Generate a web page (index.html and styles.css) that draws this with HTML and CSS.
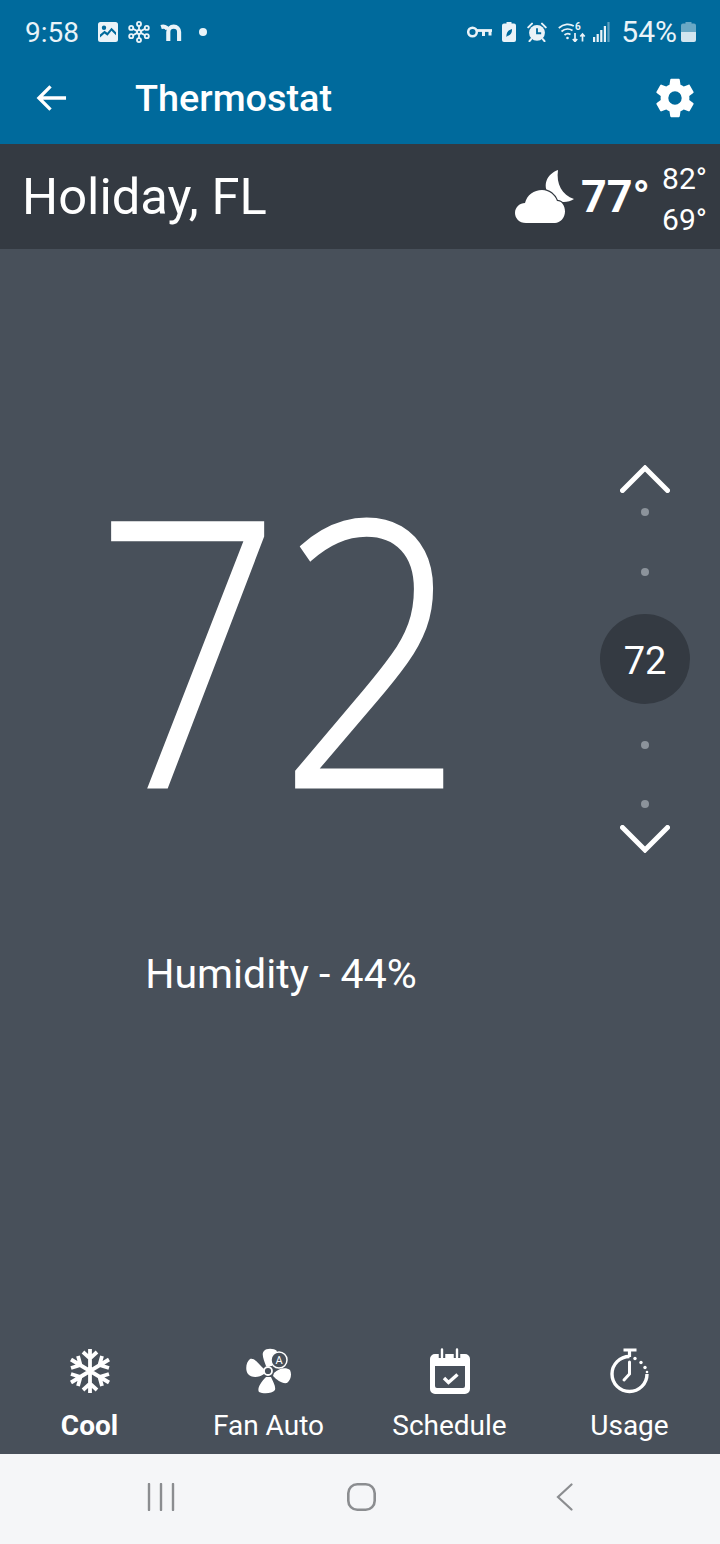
FILE: index.html
```html
<!DOCTYPE html>
<html lang="en">
<head>
  <meta charset="UTF-8">
  <meta name="viewport" content="width=device-width, initial-scale=1.0">
  <title>Thermostat</title>
  <link rel="stylesheet" href="styles.css">
</head>
<body>
  <div class="screen">
    <header class="top-bar">
      <!-- status bar -->
      <div class="status-bar">
        <div class="status-left">
          <span class="clock">9:58</span>
          <svg class="st-icon st-image" viewBox="0 0 20 20"><path fill-rule="evenodd" fill="#eaf3f8" d="M2.500 0h15A2.500 2.500 0 0 1 20 2.500v15a2.500 2.500 0 0 1-2.500 2.500h-15A2.500 2.500 0 0 1 0 17.500v-15A2.500 2.500 0 0 1 2.500 0zM6 3.500a2.200 2.200 0 1 0 0 4.400 2.200 2.200 0 0 0 0-4.400zM2 15.500l4.500-4 3 2.200 4-5 4.500 4.500v-3l-4.500-4.500-4.200 5-2.800-2L2 12.500z"/></svg>
          <svg class="st-icon st-flower" viewBox="0 0 24 24" fill="none" stroke="#eaf3f8" stroke-width="2"><circle cx="12" cy="12" r="2.200"/><circle cx="12" cy="3.200" r="2.200"/><circle cx="12" cy="20.800" r="2.200"/><circle cx="3.500" cy="7.500" r="2.200"/><circle cx="20.500" cy="7.500" r="2.200"/><circle cx="3.500" cy="16.500" r="2.200"/><circle cx="20.500" cy="16.500" r="2.200"/><path d="M12 5.400v4.400M12 14.200v4.400M5.500 8.500l4.500 2.500M18.500 8.500 14 11M5.500 15.500l4.500-2.500M18.500 15.500 14 13"/></svg>
          <svg class="st-icon st-n" viewBox="0 0 24 20" fill="none" stroke="#eaf3f8" stroke-width="4.600"><path d="M1 4.500c3-1 6 0 7 2.500M9 20V10c0-3.500 2.500-6 6-6s6 2.500 6 6v10"/></svg>
          <span class="st-dot"></span>
        </div>
        <div class="status-right">
          <svg class="st-icon st-key" viewBox="0 0 25 12" fill="none" stroke="#eaf3f8"><circle cx="5.500" cy="6" r="4.300" stroke-width="2.500"/><path d="M10 4.500h15" stroke-width="2.800"/><path d="M16.500 4.500v5.500M23 4.500v5" stroke-width="3"/></svg>
          <svg class="st-icon st-batt-leaf" viewBox="0 0 14 20"><path fill="#eaf3f8" d="M4.500 0h5v1.500H12A2 2 0 0 1 14 3.500v14.500a2 2 0 0 1-2 2H2a2 2 0 0 1-2-2V3.500a2 2 0 0 1 2-2h2.500z"/><path fill="#006a9c" d="M4.500 15c-.5-4 1.500-7 5.500-8 .3 4-1.500 6.500-4.300 6.800l-1.200 1.200z"/></svg>
          <svg class="st-icon st-alarm" viewBox="0 0 24 24"><circle cx="12" cy="13" r="9.500" fill="#eaf3f8"/><path d="M1.500 6.500 6 2M22.500 6.500 18 2M5 20.500l-2 2.500M19 20.500l2 2.500" stroke="#eaf3f8" stroke-width="2.400" stroke-linecap="round"/><path d="M12 7.500v6h5" stroke="#006a9c" stroke-width="2.200" fill="none"/></svg>
          <svg class="st-icon st-wifi" viewBox="0 0 28 20" fill="none" stroke="#eaf3f8" stroke-width="1.700"><path d="M.8 6c5-4.500 11-4.500 15-2M3.500 9.500c3.500-3 8-3 11-1M6.500 13c2-1.800 4-1.800 6-.5"/><circle cx="9.500" cy="16" r="1.300" fill="#eaf3f8" stroke="none"/><path d="M17 11v8.500M14.800 17l2.200 2.500 2.200-2.500M24.500 19.500V12M22.300 14.500l2.200-2.500 2.200 2.500" stroke-width="1.700"/><text class="wifi-six" x="17" y="8">6</text></svg>
          <svg class="st-icon st-signal" viewBox="0 0 17 20"><rect x="0" y="15" width="2.200" height="5" fill="#eaf3f8"/><rect x="3.600" y="12" width="2.200" height="8" fill="#eaf3f8"/><rect x="7.200" y="8" width="2.200" height="12" fill="#eaf3f8"/><rect x="10.800" y="4" width="2.200" height="16" fill="#eaf3f8"/><rect x="14.400" y="0" width="2.200" height="20" fill="#eaf3f8" opacity=".4"/></svg>
          <span class="battery-pct">54%</span>
          <svg class="st-icon st-batt" viewBox="0 0 15 20"><path fill="#eaf3f8" opacity=".45" d="M4.500 0h6v1.500H13A2 2 0 0 1 15 3.500V9H0V3.500a2 2 0 0 1 2-2h2.500z"/><path fill="#eaf3f8" opacity=".9" d="M0 9.500h15V18a2 2 0 0 1-2 2H2a2 2 0 0 1-2-2z"/></svg>
        </div>
      </div>
      <!-- app bar -->
      <div class="app-bar">
        <svg class="back-icon" viewBox="0 0 32 28" fill="none" stroke="#fff" stroke-width="3.400"><path d="M31 14H3M15 2 3 14l12 12"/></svg>
        <h1 class="page-title">Thermostat</h1>
        <svg class="gear-icon" viewBox="0 0 24 24"><path fill="#fff" d="M19.430 12.980c.04-.32.070-.64.070-.98s-.03-.66-.07-.98l2.110-1.650c.19-.15.240-.42.120-.64l-2-3.460c-.12-.22-.39-.3-.61-.22l-2.490 1c-.52-.4-1.080-.73-1.690-.98l-.38-2.650A.49.490 0 0 0 14 2h-4c-.25 0-.46.180-.49.420l-.38 2.650c-.61.25-1.170.59-1.690.98l-2.490-1c-.23-.09-.49 0-.61.220l-2 3.460c-.13.220-.07.490.12.640l2.110 1.650c-.04.320-.07.650-.07.980s.03.660.07.980l-2.110 1.650c-.19.150-.24.420-.12.640l2 3.460c.12.220.39.300.61.220l2.490-1c.52.400 1.080.730 1.690.980l.38 2.650c.03.240.24.420.49.420h4c.25 0 .46-.18.490-.42l.38-2.650c.61-.25 1.170-.59 1.690-.98l2.490 1c.23.090.49 0 .61-.22l2-3.460c.12-.22.070-.49-.12-.64zM12 15.500a3.500 3.500 0 1 1 0-7 3.500 3.500 0 0 1 0 7z"/></svg>
      </div>
    </header>

    <!-- location and weather -->
    <section class="location-bar">
      <span class="city">Holiday, FL</span>
      <div class="weather">
        <svg class="weather-icon" viewBox="0 0 60 54"><path fill="#fff" d="M43 0C41 14 47 25 59 29 52 34 40 33 34 25 27 15 32 4 43 0z"/><path class="cloud" d="M11 53C4 53 0 48 0 43 0 37 5 33 10 33 12 25 19 20 27 20 34 20 40 25 42 31 47 31 50 36 50 41.500 50 48 45 53 40 53z"/></svg>
        <span class="temp-now">77°</span>
        <div class="temp-range">
          <span>82°</span>
          <span>69°</span>
        </div>
      </div>
    </section>

    <main class="main">
      <div class="control">
        <div class="readout">
          <div class="big-temp">72</div>
          <div class="humidity">Humidity - 44%</div>
        </div>
        <div class="stepper">
          <svg class="chevron" viewBox="0 0 50 28" fill="none" stroke="#fff" stroke-width="5" stroke-linecap="round"><path d="M2.500 25.500 25 3l22.500 22.500"/></svg>
          <span class="step-dot dot-a"></span>
          <span class="step-dot dot-b"></span>
          <div class="setpoint">72</div>
          <span class="step-dot dot-c"></span>
          <span class="step-dot dot-d"></span>
          <svg class="chevron chevron-down" viewBox="0 0 50 28" fill="none" stroke="#fff" stroke-width="5" stroke-linecap="round"><path d="M2.500 2.500 25 25 47.500 2.500"/></svg>
        </div>
      </div>

      <nav class="tabs">
        <div class="tab tab-active">
          <svg class="tab-icon" viewBox="0 0 44 46" fill="none" stroke="#fff" stroke-width="3.800"><path d="M22 1v44M3 11.500l38 23M41 11.500l-38 23M15 4l7 6.500L29 4M15 42l7-6.500L29 42M3 20l9.500-3L10 8M41 20l-9.500-3L34 8M3 26l9.500 3L10 38M41 26l-9.500 3L34 38"/></svg>
          <span>Cool</span>
        </div>
        <div class="tab">
          <svg class="tab-icon" viewBox="0 0 46 46"><path fill="#fff" d="M20 18C18 12 15 6 18 3 20 0 28 0 31 3 29 8 27 13 26 18zM18 21C13 16 8 9 4 11 0 14-1 22 2 26 5 30 13 30 18 26zM28 25C33 20 40 19 44 22 46 26 45 32 41 35 36 36 31 32 27 28zM25 29C27 34 30 38 29 42 26 46 17 46 13 44 11 41 14 35 20 29z"/><circle cx="22" cy="23" r="4" fill="none" stroke="#fff" stroke-width="1.800"/><circle cx="33" cy="12" r="8" fill="#48505a" stroke="#fff" stroke-width="1.500"/><text class="fan-a" x="33" y="16">A</text></svg>
          <span>Fan Auto</span>
        </div>
        <div class="tab">
          <svg class="tab-icon" viewBox="0 0 40 46"><path fill="#fff" fill-rule="evenodd" d="M5 6h30a5 5 0 0 1 5 5v30a5 5 0 0 1-5 5H5a5 5 0 0 1-5-5V11a5 5 0 0 1 5-5zM5 18v20a2 2 0 0 0 2 2h26a2 2 0 0 0 2-2V18z"/><path d="M12 1v9M27 1v9" stroke="#48505a" stroke-width="6.500"/><path d="M12 1.500v8M27 1.500v8" stroke="#fff" stroke-width="2.400" stroke-linecap="round"/><path d="M14 30l4.500 4.500 9-8" fill="none" stroke="#fff" stroke-width="3.400"/></svg>
          <span>Schedule</span>
        </div>
        <div class="tab">
          <svg class="tab-icon" viewBox="0 0 38 46" fill="none" stroke="#fff"><path d="M12.500 2h13M18.500 2v7" stroke-width="3.200"/><path d="M18.500 8.500A17.500 17.500 0 1 0 36 26" stroke-width="3.400"/><path d="M18.500 14v12L13 32" stroke-width="3" stroke-linecap="round"/><circle cx="24" cy="10.500" r="1.700" fill="#fff" stroke="none"/><circle cx="30" cy="14.500" r="1.700" fill="#fff" stroke="none"/><circle cx="34" cy="19.500" r="1.700" fill="#fff" stroke="none"/><circle cx="36" cy="24" r="1.300" fill="#fff" stroke="none"/></svg>
          <span>Usage</span>
        </div>
      </nav>
    </main>

    <!-- android nav -->
    <footer class="nav-bar">
      <svg class="nav-recent" viewBox="0 0 28 28"><path d="M2 1v26M14 1v26M26 1v26" stroke="#8b8d90" stroke-width="2.400" stroke-linecap="round"/></svg>
      <svg class="nav-home" viewBox="0 0 29 28"><rect x="1.300" y="1.300" width="26.400" height="25.400" rx="9" fill="none" stroke="#8b8d90" stroke-width="2.600"/></svg>
      <svg class="nav-back" viewBox="0 0 17 28"><path d="M15.500 1.500 2 14l13.500 12.500" fill="none" stroke="#8b8d90" stroke-width="2.200" stroke-linecap="round"/></svg>
    </footer>
  </div>
</body>
</html>
```

FILE: styles.css
```css
* {
    box-sizing: border-box;
}
body {
    margin: 0;
    font-family: Roboto, "Liberation Sans", sans-serif;
    color: #fff;
}
.screen {
    display: flex;
    flex-direction: column;
    width: 720px;
    height: 1544px;
    overflow: hidden;
}

/* top */
.top-bar {
    height: 144px;
    background: #006a9c;
}
.status-bar {
    display: flex;
    justify-content: space-between;
    align-items: center;
    height: 62px;
    padding: 2px 24px 0 25px;
}
.status-left,
.status-right {
    display: flex;
    align-items: center;
}
.clock {
    font-size: 28px;
    margin-right: 19px;
    color: #eaf3f8;
}
.st-icon {
    display: block;
}
.st-image {
    width: 20px;
    height: 20px;
    margin-right: 10px;
}
.st-flower {
    width: 22px;
    height: 22px;
    margin-right: 10px;
}
.st-n {
    width: 22px;
    height: 18px;
    margin-right: 17px;
}
.st-dot {
    width: 8px;
    height: 8px;
    border-radius: 50%;
    background: #eaf3f8;
}
.st-key {
    width: 25px;
    height: 12px;
    margin-right: 10px;
}
.st-batt-leaf {
    width: 14px;
    height: 20px;
    margin-right: 11px;
}
.st-alarm {
    width: 20px;
    height: 20px;
    margin-right: 11px;
}
.st-wifi {
    width: 28px;
    height: 20px;
    margin-right: 7px;
}
.wifi-six {
    font-size: 10px;
    font-weight: 700;
    fill: #eaf3f8;
    stroke: none;
}
.st-signal {
    width: 17px;
    height: 20px;
    margin-right: 11px;
}
.battery-pct {
    font-size: 30px;
    margin-right: 4px;
    margin-top: -2px;
    color: #eaf3f8;
}
.st-batt {
    width: 15px;
    height: 20px;
}
.app-bar {
    display: flex;
    align-items: center;
    height: 72px;
    padding: 0 26px 0 36px;
}
.back-icon {
    width: 31px;
    height: 28px;
}
.page-title {
    flex: 1;
    margin: 0 0 0 68px;
    font-size: 37.8px;
    font-weight: 500;
}
.gear-icon {
    width: 46px;
    height: 46px;
    margin-right: -4px;
}

/* location */
.location-bar {
    display: flex;
    justify-content: space-between;
    align-items: center;
    height: 105px;
    padding: 0 13px 0 22px;
    background: #343a42;
}
.city {
    font-size: 50.7px;
}
.weather {
    display: flex;
    align-items: center;
}
.weather-icon {
    width: 60px;
    height: 54px;
    margin-right: 6px;
}
.cloud {
    fill: #fff;
    stroke: #343a42;
    stroke-width: 2.5;
    paint-order: stroke;
}
.temp-now {
    font-size: 45px;
    font-weight: 700;
    margin-right: 12px;
}
.temp-range {
    display: flex;
    flex-direction: column;
    padding-top: 4px;
    font-size: 30px;
    line-height: 41px;
}

/* middle */
.main {
    flex: 1;
    display: flex;
    flex-direction: column;
    background: #48505a;
}
.control {
    flex: 1;
    display: flex;
    justify-content: space-between;
    padding: 216px 30px 0 0;
}
.readout {
    width: 562px;
    text-align: center;
}
.big-temp {
    height: 358px;
    margin-right: 5px;
    font-family: "Open Sans", Roboto, sans-serif;
    font-size: 370px;
    font-weight: 300;
    line-height: 358px;
    letter-spacing: -3px;
    -webkit-text-stroke: 3px #fff;
    transform: scaleX(.88);
}
.humidity {
    margin-top: 127px;
    font-size: 41px;
}
.stepper {
    display: flex;
    flex-direction: column;
    align-items: center;
    width: 90px;
}
.chevron {
    width: 50px;
    height: 28px;
}
.chevron-down {
    margin-top: 17px;
}
.step-dot {
    width: 8px;
    height: 8px;
    border-radius: 50%;
    background: #8c939b;
}
.dot-a {
    margin-top: 15px;
}
.dot-b {
    margin-top: 52px;
}
.dot-c {
    margin-top: 37px;
}
.dot-d {
    margin-top: 51px;
}
.setpoint {
    width: 90px;
    height: 90px;
    margin-top: 38px;
    padding-top: 2px;
    border-radius: 50%;
    background: #343a42;
    font-size: 38px;
    line-height: 90px;
    text-align: center;
}

/* tabs */
.tabs {
    display: flex;
    height: 120px;
    padding-top: 14px;
}
.tab {
    display: flex;
    flex-direction: column;
    align-items: center;
    font-size: 28px;
}
.tab:nth-child(1) {
    width: 179px;
}
.tab:nth-child(2) {
    width: 179px;
}
.tab:nth-child(3) {
    width: 183px;
}
.tab:nth-child(4) {
    width: 177px;
}
.tab-active {
    font-weight: 700;
}
.tab-icon {
    width: 46px;
    height: 46px;
    margin-bottom: 15px;
}
.fan-a {
    font-size: 11px;
    fill: #fff;
    text-anchor: middle;
}

/* android nav */
.nav-bar {
    display: flex;
    height: 90px;
    align-items: center;
    padding: 0 0 4px 147px;
    background: #f5f6f8;
}
.nav-recent {
    width: 28px;
    height: 28px;
    margin-right: 172px;
}
.nav-home {
    width: 29px;
    height: 28px;
    margin-right: 180px;
}
.nav-back {
    width: 17px;
    height: 28px;
}
```
